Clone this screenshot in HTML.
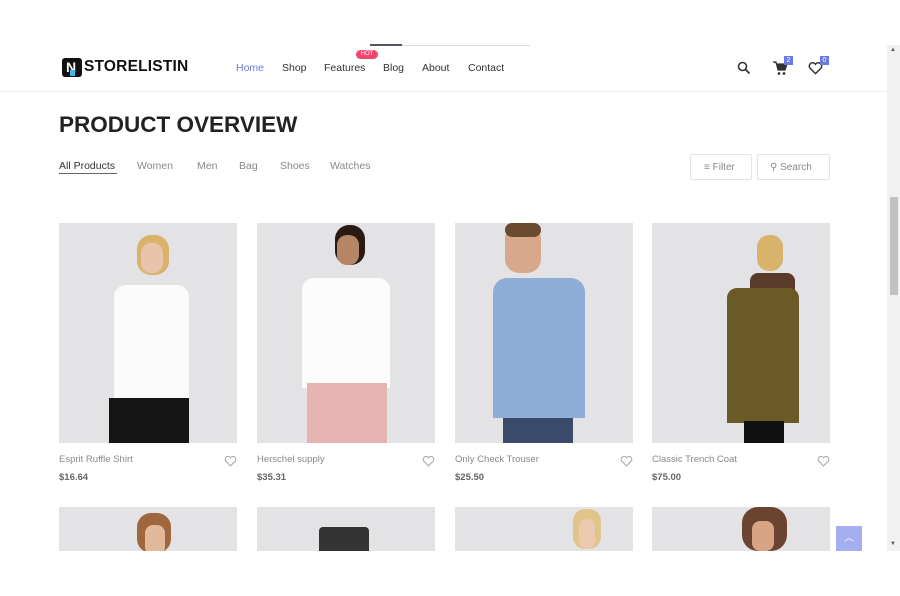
<!DOCTYPE html>
<html><head><meta charset="utf-8"><style>
*{margin:0;padding:0;box-sizing:border-box}
body{width:900px;height:596px;background:#fff;font-family:"Liberation Sans",sans-serif;position:relative;overflow:hidden}
.a{position:absolute}
.nav a{position:absolute;top:62px;font-size:10.5px;color:#333;text-decoration:none}
.tab{position:absolute;top:160px;font-size:10.5px;color:#888}
.img{position:absolute;background:#e3e3e5;overflow:hidden}
.name{position:absolute;font-size:9.5px;color:#888}
.price{position:absolute;font-size:9.5px;color:#666;font-weight:bold}
.hrt{position:absolute}
</style></head><body>
<div class="a" style="left:370px;top:45px;width:160px;height:1px;background:#ddd"></div>
<div class="a" style="left:370px;top:44px;width:32px;height:2px;background:#556"></div>
<!-- logo -->
<div class="a" style="left:62px;top:58px;width:20px;height:19px;background:#111;border-radius:3px"></div>
<div class="a" style="left:66px;top:60px;color:#fff;font-weight:bold;font-size:14px;line-height:15px">N</div>
<div class="a" style="left:70px;top:70px;width:5px;height:6px;background:#3bb8e8"></div>
<div class="a" style="left:84px;top:58px;font-size:15.5px;font-weight:bold;color:#111;letter-spacing:0.2px">STORELISTIN</div>
<div class="nav">
<a style="left:236px;color:#6c7ae0">Home</a>
<a style="left:282px">Shop</a>
<a style="left:324px">Features</a>
<a style="left:383px">Blog</a>
<a style="left:422px">About</a>
<a style="left:468px">Contact</a>
</div>
<div class="a" style="left:356px;top:50px;width:22px;height:9px;background:#f4456c;border-radius:5px;color:#fff;font-size:6px;text-align:center;line-height:9px">HOT</div>
<!-- icons -->
<svg class="a" style="left:737px;top:61px" width="14" height="14" viewBox="0 0 14 14"><circle cx="5.5" cy="5.5" r="4" fill="none" stroke="#333" stroke-width="1.6"/><path d="M8.5 8.5L12.5 12.5" stroke="#333" stroke-width="1.8"/></svg>
<svg class="a" style="left:772px;top:60px" width="16" height="16" viewBox="0 0 16 16"><path d="M1 2h3l2 8h7l2-6H5" fill="#333" stroke="#333" stroke-width="1.2"/><circle cx="7" cy="13.5" r="1.4" fill="#333"/><circle cx="12" cy="13.5" r="1.4" fill="#333"/></svg>
<div class="a" style="left:784px;top:56px;width:9px;height:9px;background:#6c7ae0;color:#fff;font-size:7px;text-align:center;line-height:9px">2</div>
<svg class="a" style="left:808px;top:61px" width="15" height="14" viewBox="0 0 24 22"><path d="M12 20L3 11a5 5 0 0 1 9-6a5 5 0 0 1 9 6z" fill="none" stroke="#333" stroke-width="2.4"/></svg>
<div class="a" style="left:820px;top:56px;width:9px;height:9px;background:#6c7ae0;color:#fff;font-size:7px;text-align:center;line-height:9px">0</div>
<div class="a" style="left:0;top:91px;width:887px;height:1px;background:#eee"></div>
<!-- scrollbar -->
<div class="a" style="left:887px;top:45px;width:13px;height:506px;background:#f1f1f1"></div>
<div class="a" style="left:890px;top:197px;width:8px;height:98px;background:#c1c1c1"></div>
<div class="a" style="left:890px;top:47px;font-size:6px;color:#555">▲</div>
<div class="a" style="left:890px;top:541px;font-size:6px;color:#555">▼</div>
<div class="a" style="left:59px;top:112px;font-size:22.5px;font-weight:bold;color:#222;letter-spacing:0px">PRODUCT OVERVIEW</div>
<div class="tab" style="left:59px;color:#333">All Products</div>
<div class="a" style="left:59px;top:173px;width:58px;height:1px;background:#666"></div>
<div class="tab" style="left:137px">Women</div>
<div class="tab" style="left:197px">Men</div>
<div class="tab" style="left:239px">Bag</div>
<div class="tab" style="left:280px">Shoes</div>
<div class="tab" style="left:330px">Watches</div>
<div class="a" style="left:690px;top:154px;width:62px;height:26px;border:1px solid #e4e4e4;border-radius:2px;font-size:10px;color:#888;padding:7px 0 0 13px">≡ Filter</div>
<div class="a" style="left:757px;top:154px;width:73px;height:26px;border:1px solid #e4e4e4;border-radius:2px;font-size:10px;color:#888;padding:7px 0 0 12px">⚲ Search</div>
<!-- products -->
<div class="img" style="left:59px;top:223px;width:178px;height:220px">
 <div class="a" style="left:78px;top:12px;width:32px;height:40px;border-radius:14px;background:#d9b36c"></div>
 <div class="a" style="left:82px;top:20px;width:22px;height:30px;border-radius:10px;background:#e9c4ad"></div>
 <div class="a" style="left:55px;top:62px;width:75px;height:115px;background:#fafafa;border-radius:12px 12px 0 0"></div>
 <div class="a" style="left:50px;top:175px;width:80px;height:45px;background:#151515"></div>
</div>
<div class="img" style="left:257px;top:223px;width:178px;height:220px">
 <div class="a" style="left:78px;top:2px;width:30px;height:40px;border-radius:14px;background:#2a1a14"></div>
 <div class="a" style="left:80px;top:12px;width:22px;height:30px;border-radius:10px;background:#b58566"></div>
 <div class="a" style="left:45px;top:55px;width:88px;height:110px;background:#fcfcfc;border-radius:12px 12px 0 0"></div>
 <div class="a" style="left:50px;top:160px;width:80px;height:60px;background:#e7b3b1"></div>
</div>
<div class="img" style="left:455px;top:223px;width:178px;height:220px">
 <div class="a" style="left:50px;top:2px;width:36px;height:48px;border-radius:14px;background:#d8a88a"></div>
 <div class="a" style="left:50px;top:0;width:36px;height:14px;border-radius:10px;background:#6a4a30"></div>
 <div class="a" style="left:38px;top:55px;width:92px;height:140px;background:#8eaed8;border-radius:14px 14px 0 0"></div>
 <div class="a" style="left:48px;top:195px;width:70px;height:25px;background:#3a4a6a"></div>
</div>
<div class="img" style="left:652px;top:223px;width:178px;height:220px">
 <div class="a" style="left:105px;top:12px;width:26px;height:36px;border-radius:12px;background:#d9b36c"></div>
 <div class="a" style="left:98px;top:50px;width:45px;height:25px;background:#5a3a28;border-radius:8px"></div>
 <div class="a" style="left:75px;top:65px;width:72px;height:135px;background:#6b5a26;border-radius:10px 10px 0 0"></div>
 <div class="a" style="left:92px;top:198px;width:40px;height:22px;background:#111"></div>
</div>
<div class="name" style="left:59px;top:454px">Esprit Ruffle Shirt</div>
<div class="price" style="left:59px;top:472px">$16.64</div>
<div class="name" style="left:257px;top:454px">Herschel supply</div>
<div class="price" style="left:257px;top:472px">$35.31</div>
<div class="name" style="left:455px;top:454px">Only Check Trouser</div>
<div class="price" style="left:455px;top:472px">$25.50</div>
<div class="name" style="left:652px;top:454px">Classic Trench Coat</div>
<div class="price" style="left:652px;top:472px">$75.00</div>
<svg class="hrt" style="left:224px;top:455px" width="13" height="12" viewBox="0 0 24 22"><path d="M12 20L3 11a5 5 0 0 1 9-6a5 5 0 0 1 9 6z" fill="none" stroke="#aaa" stroke-width="2"/></svg>
<svg class="hrt" style="left:422px;top:455px" width="13" height="12" viewBox="0 0 24 22"><path d="M12 20L3 11a5 5 0 0 1 9-6a5 5 0 0 1 9 6z" fill="none" stroke="#aaa" stroke-width="2"/></svg>
<svg class="hrt" style="left:620px;top:455px" width="13" height="12" viewBox="0 0 24 22"><path d="M12 20L3 11a5 5 0 0 1 9-6a5 5 0 0 1 9 6z" fill="none" stroke="#aaa" stroke-width="2"/></svg>
<svg class="hrt" style="left:817px;top:455px" width="13" height="12" viewBox="0 0 24 22"><path d="M12 20L3 11a5 5 0 0 1 9-6a5 5 0 0 1 9 6z" fill="none" stroke="#aaa" stroke-width="2"/></svg>
<!-- row 2 -->
<div class="img" style="left:59px;top:507px;width:178px;height:44px"><div class="a" style="left:78px;top:6px;width:34px;height:40px;border-radius:14px;background:#a0673f"></div><div class="a" style="left:86px;top:18px;width:20px;height:30px;border-radius:8px;background:#e2b89a"></div></div>
<div class="img" style="left:257px;top:507px;width:178px;height:44px"><div class="a" style="left:62px;top:20px;width:50px;height:30px;border-radius:4px;background:#333"></div></div>
<div class="img" style="left:455px;top:507px;width:178px;height:44px"><div class="a" style="left:118px;top:2px;width:28px;height:40px;border-radius:12px;background:#e0c58a"></div><div class="a" style="left:124px;top:12px;width:16px;height:30px;border-radius:8px;background:#ecc9b0"></div></div>
<div class="img" style="left:652px;top:507px;width:178px;height:44px"><div class="a" style="left:90px;top:0;width:45px;height:44px;border-radius:16px;background:#6a4430"></div><div class="a" style="left:100px;top:14px;width:22px;height:30px;border-radius:8px;background:#d7a485"></div></div>
<div class="a" style="left:836px;top:526px;width:26px;height:25px;background:#a4aef0;color:#fff;font-size:10px;text-align:center;line-height:25px">︿</div>
</body></html>
